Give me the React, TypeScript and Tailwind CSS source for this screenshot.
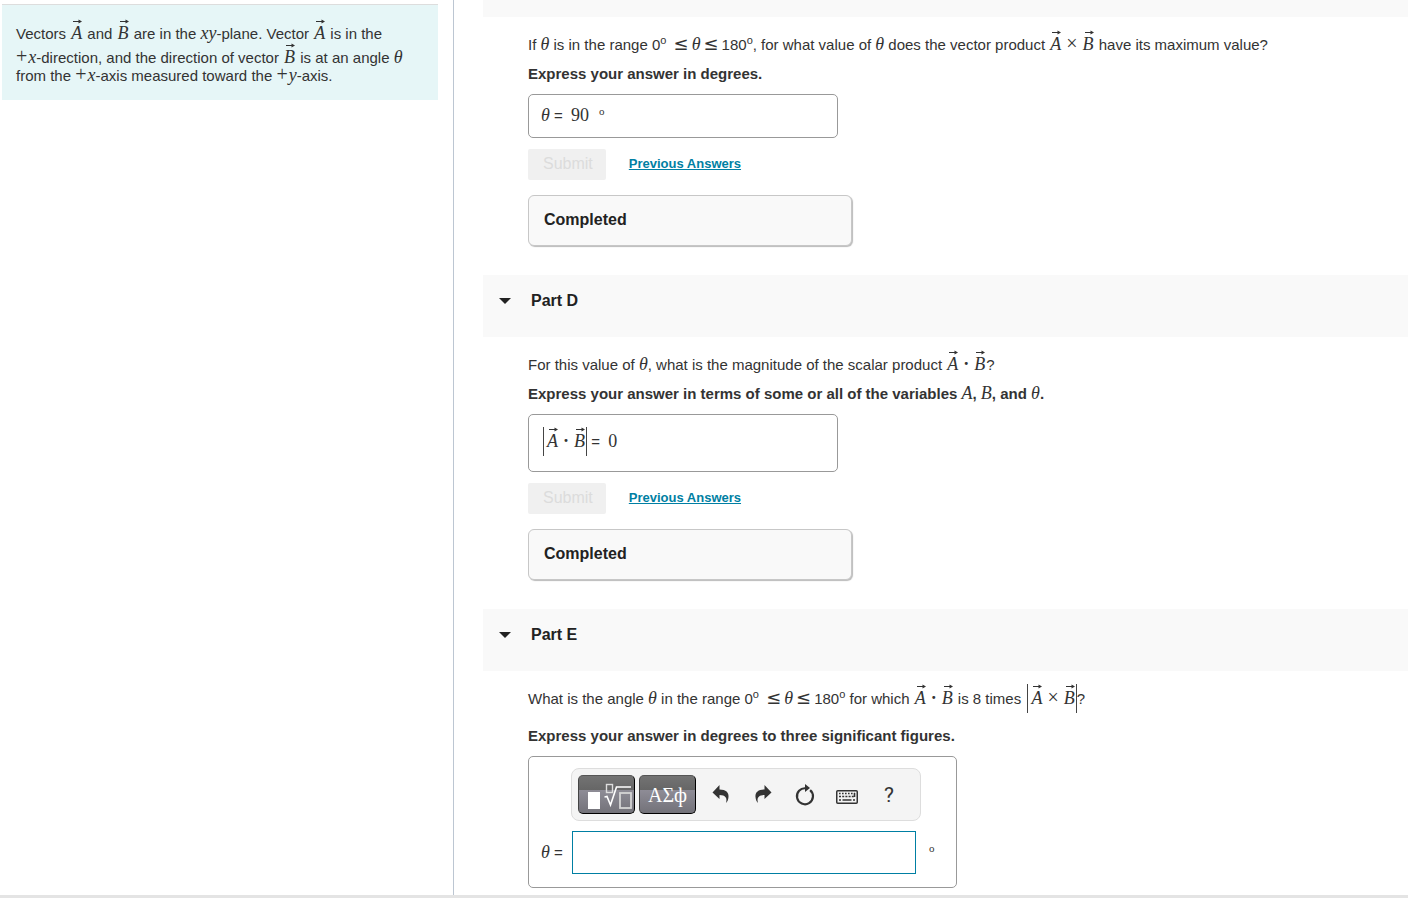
import { ReactNode, useState } from 'react';

interface ChildrenProps {
  children: ReactNode;
}

const Var = ({ children }: ChildrenProps) => (
  <i className="font-['Liberation_Serif',serif] text-[18px] leading-4 font-normal">{children}</i>
);

// Variable with an arrow above it
const Vec = ({ children }: ChildrenProps) => (
  <span className="relative inline-block min-w-[13px] pt-[6px] text-center leading-[18px]">
    <svg className="absolute top-0 left-[3px] h-[5px] w-[9px]" viewBox="0 0 9 5" aria-hidden="true">
      <path d="M0 2.5H7" stroke="#333" strokeWidth="1" />
      <path d="M5.5 0.5L9 2.5L5.5 4.5Z" fill="#333" />
    </svg>
    <Var>{children}</Var>
  </span>
);

const Times = () => <span className="mx-1 font-['Liberation_Serif',serif] text-[20px] leading-3">×</span>;

const Dot = () => <span className="mx-1 font-['Liberation_Serif',serif] text-[18px] leading-4 font-bold">·</span>;

const Plus = () => <span className="mr-px font-['Liberation_Serif',serif] text-[20px] leading-3">+</span>;

const Abs = ({ children }: ChildrenProps) => (
  <span className="mb-[3px] ml-[2px] inline-block border-x border-[#444] pb-[5px] pl-[2px]">{children}</span>
);

const Deg = () => <span className="relative -top-[6px] text-[11px] leading-none">o</span>;

const Leq = () => <span className="mx-[3px] font-['DejaVu_Sans',sans-serif] text-[18px] leading-3">≤</span>;

const Range = () => (
  <span className="whitespace-nowrap">
    0<Deg /> <Leq />
    <Var>θ</Var>
    <Leq />180<Deg />
  </span>
);

interface PartProps {
  title: string;
  children: ReactNode;
}

const Part = ({ title, children }: PartProps) => {
  const [open, setOpen] = useState(true);

  return (
    <section>
      <h2 className="bg-[#f9f9f9] pt-[17px] pb-[27px]">
        <button
          type="button"
          aria-expanded={open}
          onClick={() => setOpen(!open)}
          className="flex items-center pl-4 text-[16px] leading-[18px] font-bold text-[#222]"
        >
          <svg className="mr-5 h-[6px] w-3" viewBox="0 0 12 6" aria-hidden="true">
            <path d="M0 0H12L6 6Z" fill="#222" />
          </svg>
          {title}
        </button>
      </h2>
      {open && <div className="pt-[13px] pl-[45px]">{children}</div>}
    </section>
  );
};

const Instruction = ({ children }: ChildrenProps) => (
  <p className="mt-[11px] mb-[11px] font-bold">{children}</p>
);

const Answer = ({ children }: ChildrenProps) => (
  <div className="w-full max-w-[310px] rounded-[5px] border border-[#999] p-3">{children}</div>
);

const Completed = () => (
  <>
    <div className="mt-[11px] flex items-center gap-[23px]">
      <button
        type="button"
        disabled
        className="rounded-xs bg-[#f0f0f0] pt-[6px] pr-[13px] pb-[7px] pl-[15px] text-[16px] leading-[18px] text-[#dcdcdc]"
      >
        Submit
      </button>
      <a href="#answers" className="pb-px text-[13px] font-bold text-[#007fa3] underline">
        Previous Answers
      </a>
    </div>
    <div className="mt-[15px] mb-[29px] w-full max-w-[324px] rounded-md border border-[#c7c7c7] bg-[#f9f9f9] px-[15px] pt-[15px] pb-4 text-[16px] font-bold text-[#222] shadow-[1px_1px_1px_#bbb]">
      Completed
    </div>
  </>
);

const toolButton =
  "h-[39px] w-[57px] rounded-[5px] border border-t-[#555] border-l-[#444] border-r-black border-b-black bg-[linear-gradient(#737373_0,#666_38%,#8e8c96_38%,#737279_100%)] text-white";

const Toolbar = () => (
  <div className="flex items-center rounded-lg border border-[#ddd] bg-[#f4f4f4] p-[6px]">
    <div className="flex gap-1">
      <button type="button" aria-label="Templates" className={toolButton}>
        <svg className="h-[37px] w-[55px]" viewBox="0 0 55 37" fill="none">
          <rect x="9" y="16" width="12" height="17" fill="#fff" />
          <rect x="27.5" y="8.5" width="6" height="8" stroke="#ddd" strokeWidth="1.4" />
          <path d="M25.5 21L28 20.5L31.500 29L37.5 11H52" stroke="#fff" strokeWidth="1.6" />
          <rect x="41" y="17" width="11" height="15" stroke="#d4d4d4" strokeWidth="1.8" />
        </svg>
      </button>
      <button type="button" aria-label="Symbols" className={toolButton}>
        <span className="block pt-px font-['Liberation_Serif',serif] text-[20px]">ΑΣф</span>
      </button>
    </div>
    <div className="flex items-center gap-[18px] pl-[13px]">
      <button type="button" aria-label="Undo">
        <svg className="size-6" viewBox="0 0 24 24">
          <path d="M3.5 9.5L10.500 2V6.500C17 6.500 20 9.500 19.500 14C19.300 16.500 18.500 18.500 17 20C18.500 15 16.500 12 10.500 12V16Z" fill="#333" />
        </svg>
      </button>
      <button type="button" aria-label="Redo">
        <svg className="size-6" viewBox="0 0 24 24">
          <path d="M20.500 9.500L13.500 2V6.500C7 6.500 4 9.500 4.500 14C4.700 16.500 5.500 18.500 7 20C5.500 15 7.500 12 13.500 12V16Z" fill="#333" />
        </svg>
      </button>
      <button type="button" aria-label="Reset">
        <svg className="size-6" viewBox="0 0 24 24" fill="none">
          <path d="M13.500 5.400A8 8 0 1 0 17.500 7.500" transform="rotate(-4 12 13)" stroke="#333" strokeWidth="2.2" />
          <path d="M12 1L17 5L12 9Z" fill="#333" />
        </svg>
      </button>
      <button type="button" aria-label="Keyboard">
        <svg className="size-6" viewBox="0 0 24 24" fill="none" stroke="#333">
          <rect x="1.750" y="7.750" width="20.500" height="12.500" rx="1" strokeWidth="1.500" />
          <path d="M4 10.500H20" strokeWidth="1.600" strokeDasharray="1.600 1.400" />
          <path d="M4 13.500H20" strokeWidth="1.600" strokeDasharray="2 1.200" />
          <path d="M4 17H6M7.500 17H16.500M18 17H20M19.500 10V14" strokeWidth="1.600" />
        </svg>
      </button>
      <button type="button" aria-label="Help" className="w-6 font-['Roboto',sans-serif] text-[21px] text-[#333]">
        ?
      </button>
    </div>
  </div>
);

const App = () => {
  return (
    <div className="flex min-h-screen flex-col overflow-x-hidden border-b-[3px] border-[#e4e4e4] bg-white font-['Liberation_Sans',Arial,sans-serif] text-[15px] leading-[18px] text-[#333]">
      <div className="flex grow">
        <aside className="w-[454px] shrink-0 border-r border-[#bcc6d2] pt-1 pr-[15px] pl-[2px]">
          <p className="border-t border-[#ddd] bg-[#e6f6f7] px-[14px] pt-[14px] pb-[15px]">
            Vectors <Vec>A</Vec> and <Vec>B</Vec> are in the <Var>xy</Var>-plane. Vector <Vec>A</Vec> is in the{' '}
            <span className="whitespace-nowrap">
              <Plus />
              <Var>x</Var>-direction,
            </span>{' '}
            and the direction of vector <Vec>B</Vec> is at an angle <Var>θ</Var> from the{' '}
            <Plus />
            <Var>x</Var>-axis measured toward the <Plus />
            <Var>y</Var>-axis.
          </p>
        </aside>

        <main className="min-w-0 grow pl-[29px]">
          <div className="h-[17px] bg-[#f9f9f9]" />
          <div className="pt-[13px] pl-[45px]">
            <p>
              If <Var>θ</Var> is in the range <Range />, for what value of <Var>θ</Var> does the vector product{' '}
              <Vec>A</Vec>
              <Times />
              <Vec>B</Vec> have its maximum value?
            </p>
            <Instruction>Express your answer in degrees.</Instruction>
            <Answer>
              <Var>θ</Var> = <span className="ml-1 font-['Liberation_Serif',serif] text-[18px] leading-4">90</span>
              <span className="ml-[10px] font-['Liberation_Serif',serif]">
                <Deg />
              </span>
            </Answer>
            <Completed />
          </div>

          <Part title="Part D">
            <p>
              For this value of <Var>θ</Var>, what is the magnitude of the scalar product <Vec>A</Vec>
              <Dot />
              <Vec>B</Vec>?
            </p>
            <Instruction>
              Express your answer in terms of some or all of the variables <Var>A</Var>, <Var>B</Var>, and{' '}
              <Var>θ</Var>.
            </Instruction>
            <Answer>
              <Abs>
                <Vec>A</Vec>
                <Dot />
                <Vec>B</Vec>
              </Abs>{' '}
              = <span className="ml-1 font-['Liberation_Serif',serif] text-[18px] leading-4">0</span>
            </Answer>
            <Completed />
          </Part>

          <Part title="Part E">
            <p>
              What is the angle <Var>θ</Var> in the range <Range /> for which <Vec>A</Vec>
              <Dot />
              <Vec>B</Vec> is 8 times{' '}
              <Abs>
                <Vec>A</Vec>
                <Times />
                <Vec>B</Vec>
              </Abs>
              ?
            </p>
            <Instruction>Express your answer in degrees to three significant figures.</Instruction>
            <div className="mb-[7px] w-full max-w-[429px] rounded-[5px] border border-[#999] pt-[11px] pb-[13px] pl-3">
              <div className="ml-[30px] max-w-[350px]">
                <Toolbar />
              </div>
              <div className="mt-[10px] flex items-center">
                <label htmlFor="theta" className="w-[31px]">
                  <Var>θ</Var> =
                </label>
                <input
                  id="theta"
                  type="text"
                  className="h-[43px] min-w-0 basis-[344px] border border-[#007fa3] bg-white px-2 outline-none"
                />
                <span className="ml-[13px] font-['Liberation_Serif',serif]">
                  <Deg />
                </span>
              </div>
            </div>
          </Part>
        </main>
      </div>
    </div>
  );
};

export default App;
